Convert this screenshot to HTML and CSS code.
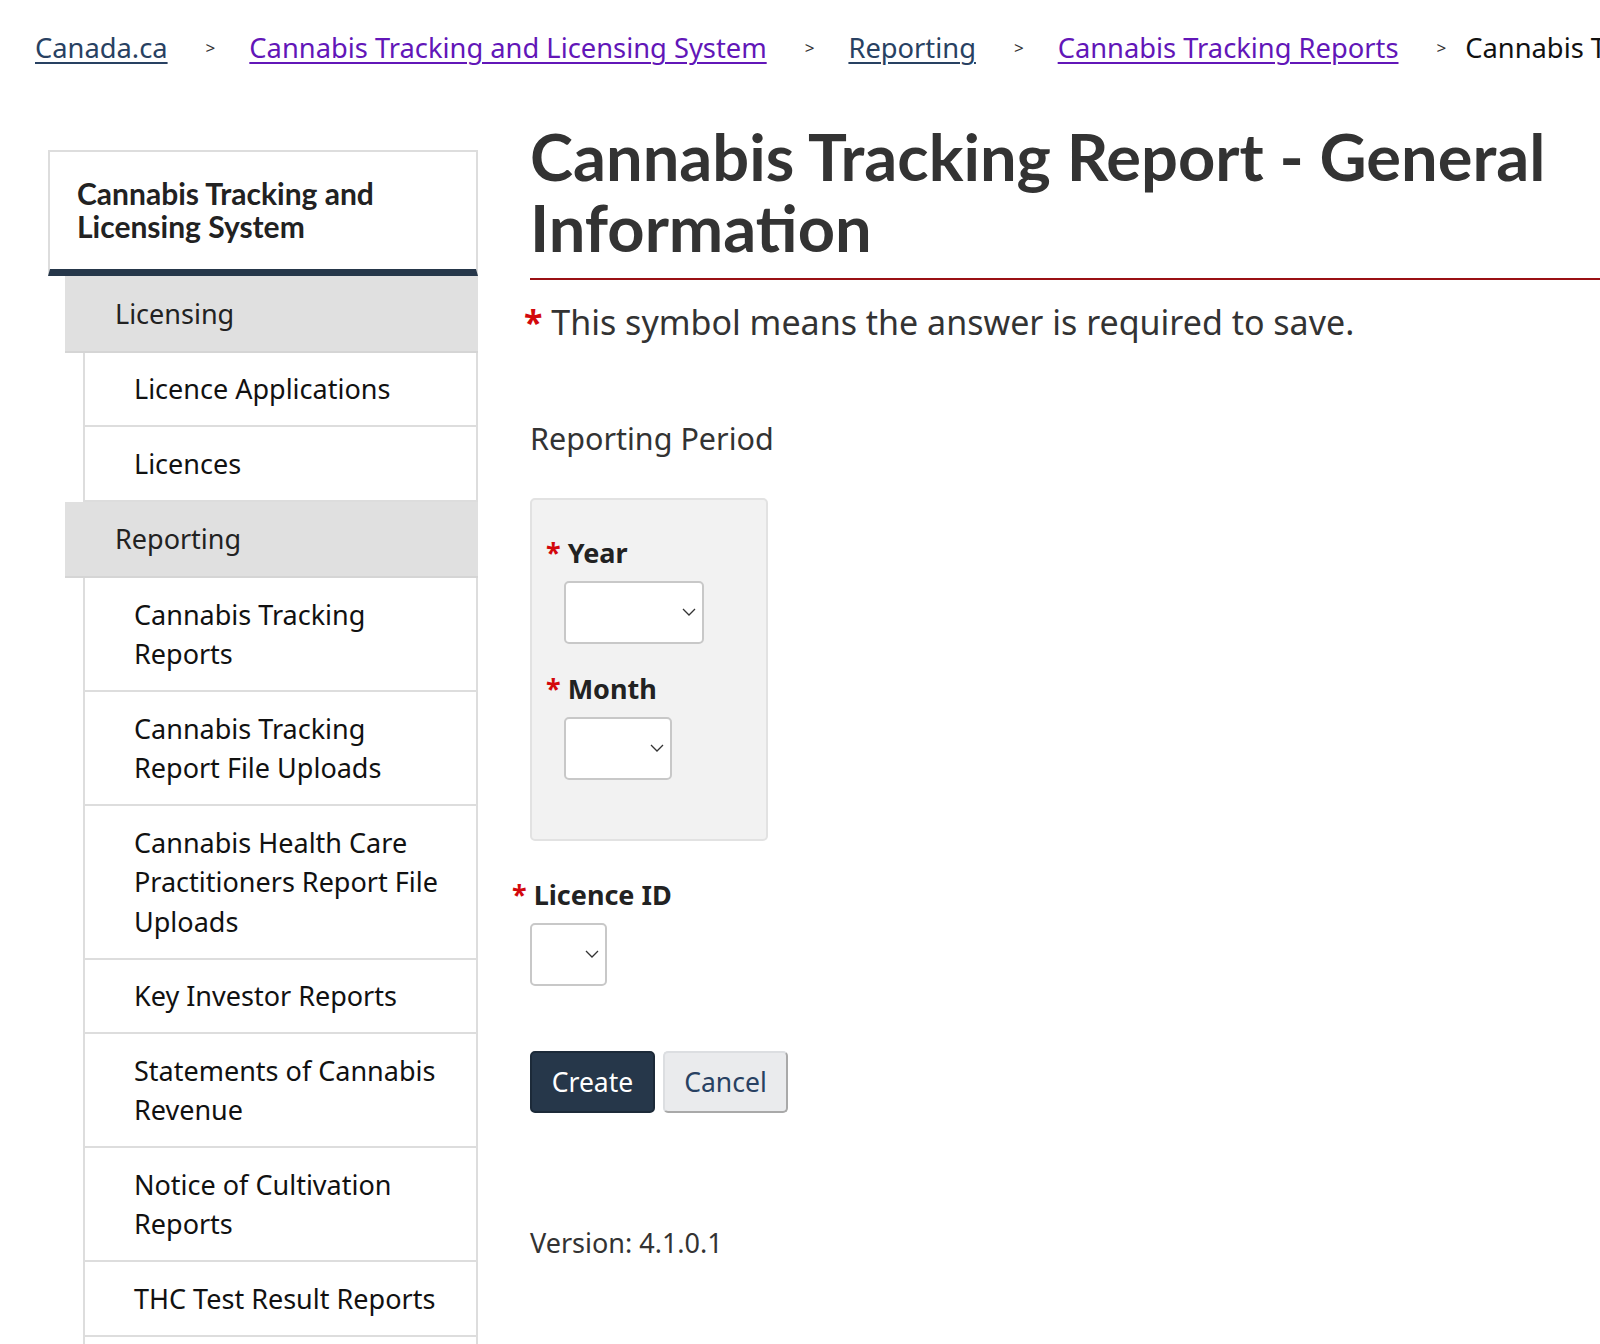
FILE: index.html
```html
<!DOCTYPE html>
<html lang="en">
<head>
    <meta charset="UTF-8">
    <meta name="viewport" content="width=device-width, initial-scale=1">
    <title>Cannabis Tracking Report - General Information</title>
    <link rel="stylesheet" href="styles.css">
</head>
<body>
    <!-- === BREADCRUMB === -->
    <nav class="breadcrumb" aria-label="Breadcrumb">
        <a href="#" class="crumb">Canada.ca</a>
        <span class="sep">&gt;</span>
        <a href="#" class="crumb visited">Cannabis Tracking and Licensing System</a>
        <span class="sep">&gt;</span>
        <a href="#" class="crumb">Reporting</a>
        <span class="sep">&gt;</span>
        <a href="#" class="crumb visited">Cannabis Tracking Reports</a>
        <span class="sep sep-last">&gt;</span>
        <span class="crumb current">Cannabis Tracking Report - General Information</span>
    </nav>

    <div class="page">
        <!-- === SIDE MENU === -->
        <aside class="sidenav">
            <div class="sidenav-title">Cannabis Tracking and Licensing System</div>
            <ul class="menu">
                <li class="menu-group">Licensing</li>
                <li>
                    <ul class="submenu">
                        <li>Licence Applications</li>
                        <li>Licences</li>
                    </ul>
                </li>
                <li class="menu-group">Reporting</li>
                <li>
                    <ul class="submenu">
                        <li>Cannabis Tracking<br>Reports</li>
                        <li>Cannabis Tracking<br>Report File Uploads</li>
                        <li>Cannabis Health Care Practitioners Report File Uploads</li>
                        <li>Key Investor Reports</li>
                        <li>Statements of Cannabis Revenue</li>
                        <li>Notice of Cultivation<br>Reports</li>
                        <li>THC Test Result Reports</li>
                        <li>Inventory Reports</li>
                    </ul>
                </li>
            </ul>
        </aside>

        <!-- === MAIN CONTENT === -->
        <main class="main">
            <h1 class="title">Cannabis Tracking Report - General Information</h1>
            <p class="required-note"><span class="req">*</span> This symbol means the answer is required to save.</p>

            <h2 class="period-title">Reporting Period</h2>

            <div class="period-box">
                <div class="field">
                    <label class="field-label" for="year"><span class="req">*</span> Year</label>
                    <div class="select-wrap select-year">
                        <select id="year" class="select"></select>
                        <svg class="chevron" viewBox="0 0 14 8" width="14" height="8"><path d="M1 1l6 6 6-6" fill="none" stroke="#333" stroke-width="1.3"/></svg>
                    </div>
                </div>
                <div class="field">
                    <label class="field-label" for="month"><span class="req">*</span> Month</label>
                    <div class="select-wrap select-month">
                        <select id="month" class="select"></select>
                        <svg class="chevron" viewBox="0 0 14 8" width="14" height="8"><path d="M1 1l6 6 6-6" fill="none" stroke="#333" stroke-width="1.3"/></svg>
                    </div>
                </div>
            </div>

            <div class="field field-licence">
                <label class="field-label" for="licence"><span class="req">*</span> Licence ID</label>
                <div class="select-wrap select-licence">
                    <select id="licence" class="select"></select>
                    <svg class="chevron" viewBox="0 0 14 8" width="14" height="8"><path d="M1 1l6 6 6-6" fill="none" stroke="#333" stroke-width="1.3"/></svg>
                </div>
            </div>

            <div class="actions">
                <button class="btn btn-primary">Create</button>
                <button class="btn btn-default">Cancel</button>
            </div>

            <p class="version">Version: 4.1.0.1</p>
        </main>
    </div>
</body>
</html>
```

FILE: styles.css
```css
/* === BASE === */
* {
    margin: 0;
    padding: 0;
    box-sizing: border-box;
}

html, body {
    overflow: hidden;
}

body {
    font-family: "Noto Sans", sans-serif;
    color: #333;
    background: #fff;
    width: 1600px;
    height: 1344px;
}

/* === BREADCRUMB === */
.breadcrumb {
    display: flex;
    align-items: flex-start;
    white-space: nowrap;
    padding: 27px 0 0 35px;
    height: 96px;
    font-size: 27.3px;
    line-height: 42px;
}

.crumb {
    color: #284162;
    text-decoration: underline;
    text-underline-offset: 4px;
    text-decoration-thickness: 1.5px;
}

.crumb.visited {
    color: #6216b8;
}

.crumb.current {
    color: #111;
    text-decoration: none;
}

.sep {
    font-size: 17px;
    color: #333;
    margin: 0 34px 0 38px;
}

.sep-last {
    margin-right: 19px;
}

/* === LAYOUT === */
.page {
    display: flex;
    align-items: flex-start;
    padding-left: 48px;
    gap: 52px;
}

/* === SIDE MENU === */
.sidenav {
    width: 430px;
    flex-shrink: 0;
    margin-top: 54px;
}

.sidenav-title {
    font-family: Lato, sans-serif;
    font-weight: 700;
    font-size: 30px;
    line-height: 33px;
    color: #222;
    border: 2px solid #ddd;
    border-bottom: 7px solid #26374a;
    padding: 25px 60px 26px 27px;
}

.menu {
    list-style: none;
    padding-left: 17px;
}

.menu-group {
    background: #e0e0e0;
    font-size: 27px;
    line-height: 39.5px;
    padding: 17.5px 16px 17.5px 50px;
    border-bottom: 2px solid #d5d5d5;
    color: #222;
}

.submenu {
    list-style: none;
    margin-left: 18px;
    border-left: 2px solid #ddd;
    border-right: 2px solid #ddd;
}

.submenu li {
    font-size: 27px;
    line-height: 39.5px;
    padding: 16.5px 16px 16.5px 49px;
    border-bottom: 2px solid #ddd;
    color: #111;
}

/* === MAIN === */
.main {
    flex: 1;
    min-width: 0;
}

.title {
    font-family: Lato, sans-serif;
    font-weight: 700;
    font-size: 65px;
    line-height: 71px;
    color: #333;
    padding-top: 25px;
    padding-bottom: 15px;
    border-bottom: 2px solid #9a1014;
}

.req {
    color: #d3080c;
    font-weight: 700;
}

.required-note {
    font-size: 34px;
    line-height: 46px;
    margin: 19px 0 0 -6px;
}

.period-title {
    font-size: 30.5px;
    font-weight: 400;
    line-height: 42px;
    margin-top: 72px;
}

.period-box {
    width: 238px;
    background: #f2f2f2;
    border: 2px solid #e2e2e2;
    border-radius: 5px;
    margin-top: 39px;
    padding: 34px 0 59px 32px;
}

.field + .field {
    margin-top: 26px;
}

.field-label {
    display: block;
    font-size: 27px;
    font-weight: 700;
    line-height: 37px;
    color: #222;
    margin-left: -18px;
}

.select-wrap {
    position: relative;
    margin-top: 10px;
    height: 63px;
}

.select {
    appearance: none;
    -webkit-appearance: none;
    width: 100%;
    height: 100%;
    background: #fff;
    border: 2px solid #c8c8c8;
    border-radius: 5px;
    font: inherit;
}

.chevron {
    position: absolute;
    right: 8px;
    top: 27px;
    pointer-events: none;
}

.select-year {
    width: 140px;
}

.select-month {
    width: 108px;
}

.select-licence {
    width: 77px;
}

.field-licence {
    margin-top: 35px;
}

/* === BUTTONS === */
.actions {
    display: flex;
    gap: 8px;
    margin-top: 65px;
}

.btn {
    font-family: "Noto Sans", sans-serif;
    font-size: 26.5px;
    height: 62px;
    width: 125px;
    border-radius: 5px;
    cursor: pointer;
}

.btn-primary {
    background: #26374a;
    color: #fff;
    border: 2px solid #1c2a39;
}

.btn-default {
    background: #eaebed;
    color: #284162;
    border: 2px solid #dcdee1;
    border-bottom-color: #a9a9a9;
    border-right-color: #a9a9a9;
}

.version {
    font-size: 27px;
    line-height: 38px;
    margin-top: 111px;
}
```
